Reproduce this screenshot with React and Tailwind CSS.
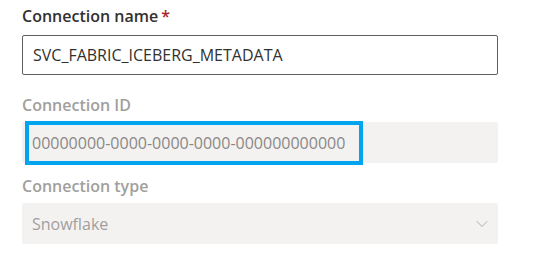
import { ChevronDown } from "lucide-react";

const Label = ({ children, disabled, required, className = "" }) => (
    <div
        className={`text-[16px] leading-[22px] font-semibold ${
            disabled ? "text-[#a19f9d]" : "text-[#323130]"
        } ${className}`}
    >
        {children}
        {required && <span className="text-[#a4262c] ml-[3px]">*</span>}
    </div>
);

export default function App() {
    return (
        <div
            className="w-[534px] h-[258px] bg-white pl-[22px] pt-[5px]"
            style={{ fontFamily: '"Segoe UI", "Open Sans", "Noto Sans", sans-serif' }}
        >
            <div className="w-[476px]">
                {/* Connection name */}
                <Label required>Connection name</Label>
                <div className="mt-[8px] h-[40px] border border-[#605e5c] rounded-[2px] flex items-center px-[10px] text-[16px] text-[#323130]">
                    SVC_FABRIC_ICEBERG_METADATA
                </div>

                {/* Connection ID */}
                <Label disabled className="mt-[19px]">
                    Connection ID
                </Label>
                <div className="mt-[6px] h-[41px] bg-[#f3f2f1] rounded-[2px] relative flex items-center px-[10px] text-[16px] text-[#8a8886]">
                    00000000-0000-0000-0000-000000000000
                    <div className="absolute left-[3px] top-[-1px] w-[338px] h-[44px] border-[4px] border-[#00a4ef]" />
                </div>

                {/* Connection type */}
                <Label disabled className="mt-[12px]">
                    Connection type
                </Label>
                <div className="mt-[6px] h-[41px] bg-[#f3f2f1] rounded-[2px] flex items-center justify-between pl-[10px] pr-[6px] text-[16px] text-[#a19f9d]">
                    <span>Snowflake</span>
                    <ChevronDown size={20} strokeWidth={1} className="text-[#a19f9d]" />
                </div>
            </div>
        </div>
    );
}
